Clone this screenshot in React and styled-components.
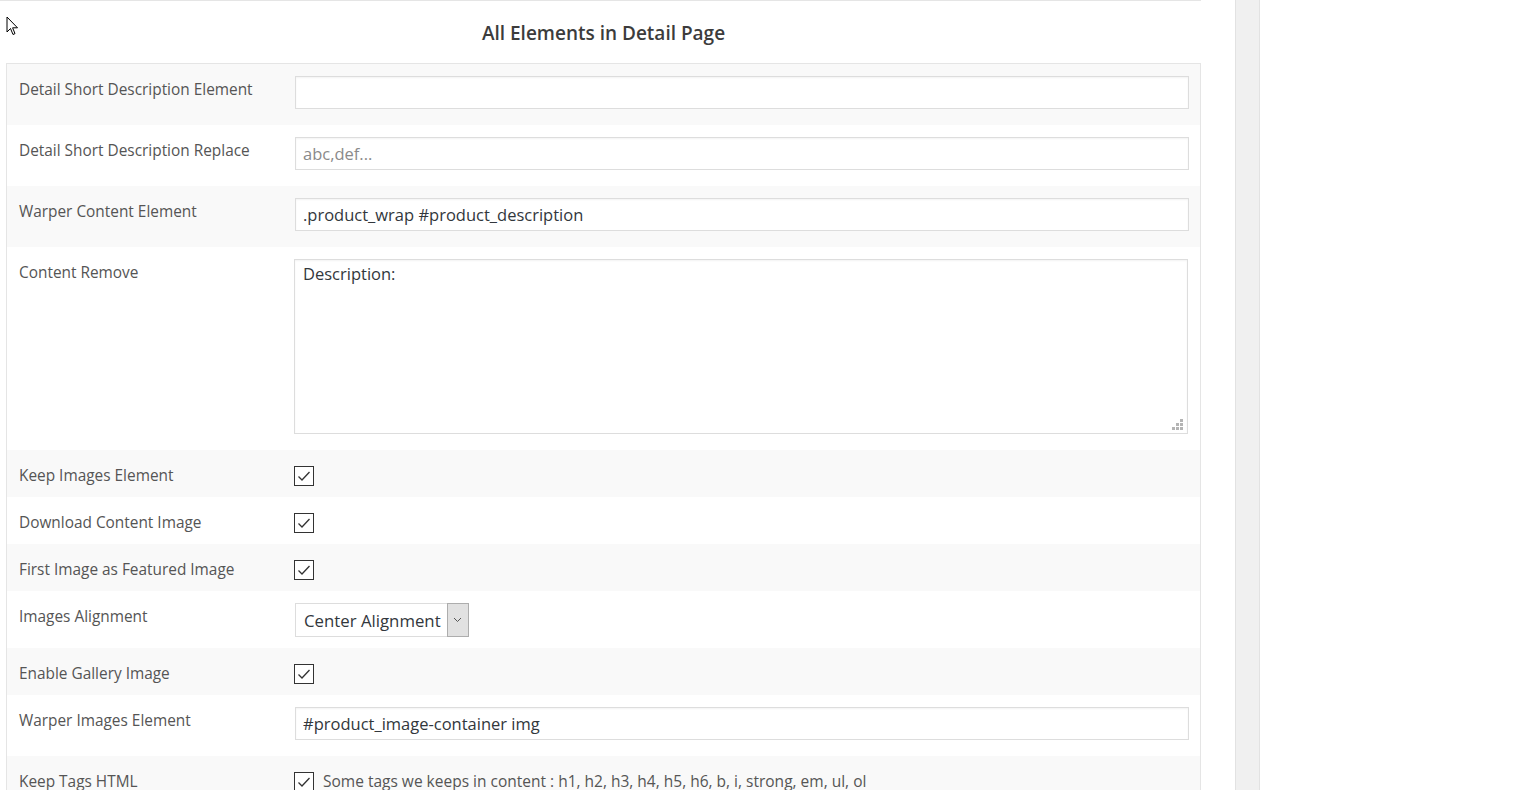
import React from "react";
import styled, { createGlobalStyle } from "styled-components";

const GlobalStyle = createGlobalStyle`
  html, body {
    margin: 0;
    padding: 0;
    background: #fff;
    font-family: "Open Sans", "Noto Sans", sans-serif;
    color: #444;
  }
`;

const Page = styled.div`
  position: relative;
  display: flex;
  height: 790px;
  overflow: hidden;
`;

const Main = styled.div`
  width: 1201px;
  border-top: 1px solid #e5e5e5;
  box-sizing: border-box;
`;

const Title = styled.h2`
  box-sizing: border-box;
  margin: 0;
  height: 62px;
  display: flex;
  align-items: center;
  justify-content: center;
  padding: 2px 0 0 6px;
  font-size: 19px;
  font-weight: 600;
  color: #3c3c3c;
`;

const Panel = styled.div`
  margin-left: 6px;
  border: 1px solid #e5e5e5;
  border-bottom: none;
`;

const Row = styled.div`
  display: grid;
  grid-template-columns: 276px 1fr;
  padding: 12px 11px 11px 12px;
  background: ${(p) => (p.$alt ? "#f9f9f9" : "#fff")};
`;

const Label = styled.div`
  margin-top: 3px;
  font-size: 15.4px;
  line-height: 21px;
  color: #555;
`;

const Field = styled.div`
  display: flex;
  align-items: flex-start;
  min-height: 24px;
`;

const TextInput = styled.input`
  box-sizing: border-box;
  width: 100%;
  height: 33px;
  margin-bottom: 5px;
  padding: 0 7px;
  border: 1px solid #ddd;
  box-shadow: inset 0 1px 2px rgba(0, 0, 0, 0.05);
  font-family: inherit;
  font-size: 16.5px;
  color: #32373c;
  outline: none;
  &::placeholder {
    color: #8a8a8a;
  }
`;

const AreaWrap = styled.div`
  position: relative;
  width: 100%;
  margin-left: -1px;
  margin-right: 1px;
`;

const TextArea = styled.textarea`
  display: block;
  box-sizing: border-box;
  width: 100%;
  height: 175px;
  margin-bottom: 5px;
  padding: 2px 8px;
  border: 1px solid #ddd;
  box-shadow: inset 0 1px 2px rgba(0, 0, 0, 0.05);
  font-family: inherit;
  font-size: 16.5px;
  color: #32373c;
  resize: none;
  outline: none;
`;

const Grip = styled.svg`
  position: absolute;
  right: 4px;
  bottom: 8px;
`;

const Check = styled.span`
  box-sizing: border-box;
  display: inline-flex;
  align-items: center;
  justify-content: center;
  width: 20px;
  height: 20px;
  margin-top: 4px;
  margin-left: -1px;
  border: 1px solid #333;
  background: #fff;
  flex: none;
`;

const Note = styled.span`
  margin-left: 9px;
  margin-top: 2px;
  font-size: 15.5px;
  color: #555;
`;

const Select = styled.div`
  display: flex;
  height: 34px;
  box-sizing: border-box;
  border: 1px solid #ddd;
  background: #fff;
`;

const SelectText = styled.span`
  display: flex;
  align-items: center;
  padding: 0 6px 0 8px;
  font-size: 16.8px;
  color: #32373c;
`;

const SelectButton = styled.span`
  display: flex;
  align-items: center;
  justify-content: center;
  width: 20px;
  margin: -1px -1px -1px 0;
  border: 1px solid #adadad;
  background: #e1e1e1;
`;

const Scrollbar = styled.div`
  margin-left: 34px;
  width: 23px;
  border-left: 1px solid #e2e2e2;
  border-right: 1px solid #e2e2e2;
  background: #f0f0f0;
`;

const Cursor = styled.svg`
  position: absolute;
  left: 6px;
  top: 16px;
`;

function CheckBox() {
  return (
    <Check>
      <svg width="14" height="12" viewBox="0 0 14 12">
        <path d="M1.5 6.5 L5 10 L12.5 2" fill="none" stroke="#333" strokeWidth="1.3" />
      </svg>
    </Check>
  );
}

const rows = [
  { label: "Detail Short Description Element", type: "input", value: "" },
  { label: "Detail Short Description Replace", type: "input", placeholder: "abc,def..." },
  { label: "Warper Content Element", type: "input", value: ".product_wrap #product_description" },
  { label: "Content Remove", type: "textarea", value: "Description:" },
  { label: "Keep Images Element", type: "check" },
  { label: "Download Content Image", type: "check" },
  { label: "First Image as Featured Image", type: "check" },
  { label: "Images Alignment", type: "select", value: "Center Alignment" },
  { label: "Enable Gallery Image", type: "check" },
  { label: "Warper Images Element", type: "input", value: "#product_image-container img" },
  {
    label: "Keep Tags HTML",
    type: "check",
    note: "Some tags we keeps in content : h1, h2, h3, h4, h5, h6, b, i, strong, em, ul, ol",
  },
];

function renderField(row) {
  switch (row.type) {
    case "input":
      return <TextInput defaultValue={row.value} placeholder={row.placeholder} />;
    case "textarea":
      return (
        <AreaWrap>
          <TextArea defaultValue={row.value} />
          <Grip width="12" height="12" viewBox="0 0 12 12">
            {[
              [8, 0],
              [4, 4],
              [8, 4],
              [0, 8],
              [4, 8],
              [8, 8],
            ].map(([x, y]) => (
              <rect key={x + "-" + y} x={x} y={y} width="3" height="3" fill="#b4b4b4" />
            ))}
          </Grip>
        </AreaWrap>
      );
    case "select":
      return (
        <Select>
          <SelectText>{row.value}</SelectText>
          <SelectButton>
            <svg width="9" height="6" viewBox="0 0 9 6">
              <path d="M1 1 L4.5 4.5 L8 1" fill="none" stroke="#555" strokeWidth="1" />
            </svg>
          </SelectButton>
        </Select>
      );
    default:
      return (
        <>
          <CheckBox />
          {row.note && <Note>{row.note}</Note>}
        </>
      );
  }
}

const App = () => {
  return (
    <Page>
      <GlobalStyle />
      <Main>
        <Title>All Elements in Detail Page</Title>
        <Panel>
          {rows.map((row, i) => (
            <Row key={row.label} $alt={i % 2 === 0}>
              <Label>{row.label}</Label>
              <Field>{renderField(row)}</Field>
            </Row>
          ))}
        </Panel>
      </Main>
      <Scrollbar />
      <Cursor width="13" height="20" viewBox="0 0 13 20">
        <path d="M1 1 L1 16 L4.5 12.5 L7 18.5 L9 17.6 L6.6 11.8 L11.5 11.8 Z" fill="#fff" stroke="#000" strokeWidth="1" />
      </Cursor>
    </Page>
  );
};

export default App;
